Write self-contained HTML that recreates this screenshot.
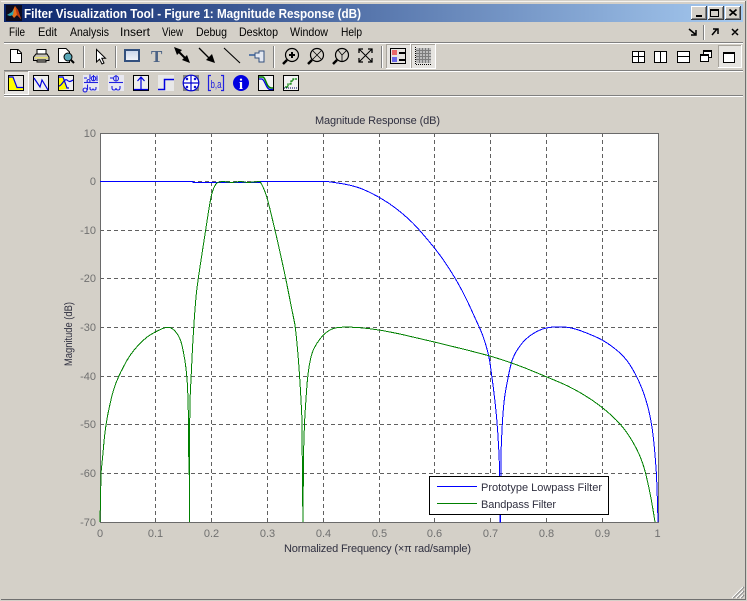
<!DOCTYPE html>
<html><head><meta charset="utf-8"><title>Filter Visualization Tool</title>
<style>html,body{margin:0;padding:0;background:#d4d0c8;overflow:hidden}svg{display:block}
text{font-family:"Liberation Sans",sans-serif}</style></head><body>
<svg xmlns="http://www.w3.org/2000/svg" width="747" height="601" viewBox="0 0 747 601">
<defs><linearGradient id="tb" x1="0" x2="1" y1="0" y2="0"><stop offset="0" stop-color="#0a246a"/><stop offset="1" stop-color="#a6caf0"/></linearGradient>
<linearGradient id="rf" x1="0" x2="0" y1="0" y2="1"><stop offset="0" stop-color="#c8d4ea"/><stop offset="1" stop-color="#f4f6fb"/></linearGradient></defs>
<rect width="747" height="601" fill="#d4d0c8"/>
<g shape-rendering="crispEdges">
<rect x="1" y="1" width="745" height="1" fill="#f4f2ee"/>
<rect x="745" y="1" width="1" height="599" fill="#707070"/>
<rect x="1" y="599" width="745" height="1" fill="#707070"/>
<rect x="4" y="4" width="739" height="18" fill="url(#tb)"/>
<rect x="6" y="5" width="16" height="16" fill="#0c0c20"/>
<rect x="4" y="42" width="739" height="1" fill="#808080"/><rect x="4" y="43" width="739" height="1" fill="#fff"/>
<rect x="4" y="70" width="739" height="1" fill="#808080"/><rect x="4" y="71" width="739" height="1" fill="#fff"/>
<rect x="4" y="95" width="739" height="1" fill="#808080"/><rect x="4" y="96" width="739" height="1" fill="#fff"/>
</g>
<polygon points="7,15 12,12 15,6 18,10 21,19 17,15 14,18 11,14" fill="#e8701a"/><polygon points="7,15 12,12 14,9 13,15 10,16" fill="#2aa6b4"/><polygon points="15,6 18,10 21,19 17,15" fill="#c03a10"/>
<text x="24" y="18" font-size="13" font-weight="bold" fill="#fff" textLength="337" lengthAdjust="spacingAndGlyphs">Filter Visualization Tool - Figure 1: Magnitude Response (dB)</text>
<g shape-rendering="crispEdges">
<rect x="691" y="6" width="16" height="14" fill="#404040"/><rect x="691" y="6" width="15" height="13" fill="#fff"/><rect x="692" y="7" width="14" height="12" fill="#808080"/><rect x="692" y="7" width="13" height="11" fill="#d4d0c8"/>
<rect x="708" y="6" width="16" height="14" fill="#404040"/><rect x="708" y="6" width="15" height="13" fill="#fff"/><rect x="709" y="7" width="14" height="12" fill="#808080"/><rect x="709" y="7" width="13" height="11" fill="#d4d0c8"/>
<rect x="725" y="6" width="16" height="14" fill="#404040"/><rect x="725" y="6" width="15" height="13" fill="#fff"/><rect x="726" y="7" width="14" height="12" fill="#808080"/><rect x="726" y="7" width="13" height="11" fill="#d4d0c8"/>
<rect x="696" y="15" width="6" height="2" fill="#000"/>
<path d="M710.500 9.500H718.500V16.500H710.500Z" fill="none" stroke="#000"/><rect x="710" y="9" width="9" height="2" fill="#000"/>
</g>
<path d="M729.500 9.500L736.500 15.500M736.500 9.500L729.500 15.500" stroke="#000" stroke-width="1.800" fill="none"/>
<g font-size="12" fill="#000">
<text x="9" y="36" textLength="16" lengthAdjust="spacingAndGlyphs">File</text>
<text x="38" y="36" textLength="19" lengthAdjust="spacingAndGlyphs">Edit</text>
<text x="70" y="36" textLength="39" lengthAdjust="spacingAndGlyphs">Analysis</text>
<text x="120" y="36" textLength="30" lengthAdjust="spacingAndGlyphs">Insert</text>
<text x="162" y="36" textLength="21" lengthAdjust="spacingAndGlyphs">View</text>
<text x="196" y="36" textLength="31" lengthAdjust="spacingAndGlyphs">Debug</text>
<text x="239" y="36" textLength="39" lengthAdjust="spacingAndGlyphs">Desktop</text>
<text x="290" y="36" textLength="38" lengthAdjust="spacingAndGlyphs">Window</text>
<text x="341" y="36" textLength="21" lengthAdjust="spacingAndGlyphs">Help</text>
</g>
<path d="M689 29L695 34M696 30V35H691M712 35L717 29M713 29H718V34M732 29L738 35M738 29L732 35" stroke="#000" stroke-width="1.500" fill="none"/>
<g shape-rendering="crispEdges"><rect x="703" y="25" width="1" height="15" fill="#808080"/><rect x="704" y="25" width="1" height="15" fill="#fff"/>
<rect x="83" y="46" width="1" height="22" fill="#808080"/><rect x="84" y="46" width="1" height="22" fill="#fff"/>
<rect x="115" y="46" width="1" height="22" fill="#808080"/><rect x="116" y="46" width="1" height="22" fill="#fff"/>
<rect x="273" y="46" width="1" height="22" fill="#808080"/><rect x="274" y="46" width="1" height="22" fill="#fff"/>
<rect x="381" y="46" width="1" height="22" fill="#808080"/><rect x="382" y="46" width="1" height="22" fill="#fff"/>
</g>
<path d="M10.500 49.500H18L21.500 53V62.500H10.500Z" fill="#fff" stroke="#000"/><path d="M17.500 49.500V53.500H21.500" fill="none" stroke="#000"/>
<path d="M37 55V49.500H46V55" fill="#fff" stroke="#000"/><path d="M36 54H47L49 57V60.500H46V62H37V60.500H33.500V57Z" fill="#c4c0b8" stroke="#000"/><rect x="35" y="57" width="13" height="1.500" fill="#e8e070"/><path d="M37 60H46" stroke="#000"/>
<path d="M58.500 48.500H66L69.500 52V62.500H58.500Z" fill="#fff" stroke="#000"/><circle cx="68" cy="57" r="4" fill="#5aa8b8" stroke="#000"/><path d="M71 60L74 63" stroke="#000" stroke-width="2"/>
<path d="M96.500 49.500V62L99.500 59.200L102 64L104 63L101.800 58.300H105.500Z" fill="#fff" stroke="#000"/>
<rect x="125" y="50" width="14" height="11" fill="url(#rf)" stroke="#33507e" stroke-width="2"/>
<text x="151" y="62" font-size="17" font-weight="bold" style="font-family:'Liberation Serif',serif" fill="#4b6285">T</text>
<path d="M178 51L187 60" stroke="#000" stroke-width="2"/><polygon points="174,47 182,50 177,55" fill="#000"/><polygon points="190,63 182,60 187,55" fill="#000"/>
<path d="M199 48L210 59" stroke="#000" stroke-width="1.300"/><polygon points="215,63 206,60 212,54" fill="#000"/>
<path d="M224 48L240 63" stroke="#000" stroke-width="1.100"/>
<path d="M249 55H255" stroke="#5a7aa8" stroke-width="2"/><path d="M255 53H259V51H264V62H259V58H255Z" fill="#e4e8f0" stroke="#33507e"/>
<g fill="none" stroke="#000">
<circle cx="292" cy="55" r="6.500" stroke-width="1.200"/><path d="M287 60L283 64" stroke-width="2.500"/><path d="M289 55H295M292 52V58" stroke-width="2"/>
<circle cx="317" cy="55" r="6.500" stroke-width="1.200"/><path d="M312 60L308 64" stroke-width="2.500"/><path d="M313 51L321 59M321 51L313 59" stroke-width=".8"/>
<circle cx="342" cy="55" r="6.500" stroke-width="1.200"/><path d="M337 60L333 64" stroke-width="2.500"/><path d="M338 50L342 55L347 50M342 55V61" stroke-width=".8"/>
<path d="M359 49L372 62M372 49L359 62" stroke-width="1"/><path d="M359 53V49H363M368 49H372V53M359 58V62H363M368 62H372V58" stroke-width="1.300"/>
</g>
<g shape-rendering="crispEdges">
<rect x="386" y="44" width="25" height="25" fill="#fff"/><rect x="386" y="44" width="24" height="24" fill="#a8a49c"/><rect x="387" y="45" width="23" height="23" fill="#e6e4e0"/>
<rect x="411" y="44" width="25" height="25" fill="#fff"/><rect x="411" y="44" width="24" height="24" fill="#a8a49c"/><rect x="412" y="45" width="23" height="23" fill="#e6e4e0"/>
<rect x="390.500" y="48.500" width="15" height="15" fill="#e6e4e0" stroke="#000"/>
<rect x="392" y="50" width="5" height="5" fill="#e86868"/><rect x="392" y="57" width="5" height="5" fill="#6868e8"/>
<rect x="399" y="52" width="6" height="2" fill="#000"/><rect x="399" y="59" width="6" height="2" fill="#000"/>
<rect x="416" y="48" width="15" height="15" fill="#bcbcbc"/>
<path d="M419.500 48V63M422.500 48V63M425.500 48V63M428.500 48V63M416 50.500H431M416 53.500H431M416 56.500H431M416 59.500H431" stroke="#7c7c7c"/>
<path d="M415.500 47V64.500H431" stroke="#000" stroke-dasharray="1 1" fill="none"/>
<rect x="632.500" y="51.500" width="12" height="11" fill="#fff" stroke="#000"/><path d="M638.500 51V63M632 56.500H645" stroke="#000"/>
<rect x="654.500" y="51.500" width="12" height="11" fill="#fff" stroke="#000"/><path d="M660.500 51V63" stroke="#000"/>
<rect x="677.500" y="51.500" width="12" height="11" fill="#fff" stroke="#000"/><path d="M677 56.500H690" stroke="#000"/>
<rect x="703.500" y="50.500" width="8" height="7" fill="#fff" stroke="#000"/><rect x="703" y="50" width="9" height="2" fill="#000"/>
<rect x="700.500" y="54.500" width="8" height="7" fill="#fff" stroke="#000"/><rect x="700" y="54" width="9" height="2" fill="#000"/>
<rect x="718" y="45" width="24" height="23" fill="#fff"/><rect x="718" y="45" width="23" height="22" fill="#a8a49c"/><rect x="719" y="46" width="22" height="21" fill="#e6e4e0"/>
<rect x="723.500" y="52.500" width="11" height="10" fill="#fff" stroke="#000"/><rect x="723" y="52" width="12" height="2" fill="#000"/>
<rect x="4" y="71" width="25" height="24" fill="#fff"/><rect x="4" y="71" width="24" height="23" fill="#a8a49c"/><rect x="5" y="72" width="23" height="22" fill="#e6e4e0"/>
<rect x="8.500" y="75.500" width="15" height="15" fill="#e6e4e0" stroke="#000" stroke-width="1"/>
<rect x="33.500" y="75.500" width="15" height="15" fill="#eee" stroke="#000"/>
<rect x="58.500" y="75.500" width="15" height="15" fill="#eee" stroke="#000"/>
<rect x="83" y="75" width="16" height="16" fill="#e8e8f0"/>
<rect x="108" y="75" width="16" height="16" fill="#e8e8f0"/>
<rect x="133.500" y="75.500" width="15" height="15" fill="#eee" stroke="#000"/>
<rect x="158" y="75" width="16" height="16" fill="#e8e8e8"/>
<rect x="183" y="75" width="16" height="16" fill="#808080"/>
<rect x="258.500" y="75.500" width="15" height="15" fill="#f2f2f2" stroke="#000"/>
<rect x="283.500" y="75.500" width="15" height="15" fill="#f2f2f2" stroke="#000"/>
</g>
<polygon points="9,77 13,77 17,88 23,88 23,90 9,90" fill="#ffff00"/><path d="M9 77H13L17 87.500H23" fill="none" stroke="#0000e0" stroke-width="1.200"/>
<path d="M34 78L40 87L42 80L48 90" fill="none" stroke="#0000e0" stroke-width="1.200"/>
<polygon points="59,78 63,78 67,89 59,90" fill="#ffff00"/><path d="M59 77H63L67 88H69M59 86C62 86 64 78 67 80C69 82 70 82 73 80" fill="none" stroke="#0000e0" stroke-width="1.200"/>
<g fill="none" stroke="#2020e0" stroke-width="1.100">
<path d="M84 82.500H98"/><path d="M84 78H87M88.500 79.500a1.500 1.500 0 1 0 .1 0M90 74.500V79"/><circle cx="93.500" cy="78.500" r="2.200"/><path d="M93.500 75V81M97 75.500V81"/>
<path d="M85 88a2 2 0 1 0 .1 0M87.500 84.500V90M90 87v1.500q0 1.500 1.500 1.500t1.500-1.500q0 1.500 1.500 1.500t1.500-1.500V87"/>
<path d="M109 82.500H123"/><path d="M110 78H113"/><circle cx="116" cy="78.500" r="2.500"/><path d="M116 75V81.500"/>
<path d="M112 86v2q0 2 2 2t2-2q0 2 2 2t2-2v-2"/>
<path d="M141 89V77M137.500 81L141 77L144.500 81M134 89.500H148" stroke="#0000e0" stroke-width="1.200"/>
<path d="M158 89.500H164.500V79.500H174" stroke="#0000e0" stroke-width="1.500"/>
</g>
<circle cx="191" cy="83" r="7.800" fill="#fff" stroke="#0000d0" stroke-width="1.200"/><path d="M183 83H199M191 75V91" stroke="#0000d0" stroke-width="1.200"/><path d="M186 78l2 2m0-2l-2 2M194 78l2 2m0-2l-2 2M186 86l2 2m0-2l-2 2M194 86l2 2m0-2l-2 2" stroke="#0000d0"/>
<path d="M211 75.500H208.500V90.500H211M221 75.500H223.500V90.500H221" fill="none" stroke="#2020e0" stroke-width="1.200"/>
<text x="210.500" y="88" font-size="11" fill="#2020e0" textLength="11" lengthAdjust="spacingAndGlyphs">b,a</text>
<circle cx="241" cy="83" r="8" fill="#0000e0"/>
<text x="241" y="89" font-size="15" font-weight="bold" fill="#fff" text-anchor="middle" style="font-family:'Liberation Serif',serif">i</text>
<path d="M259 77H263C266 78 266 87 271 88H273" fill="none" stroke="#008000" stroke-width="1.500"/><path d="M259 79H262C265 80 266 89 270 89.500H273" fill="none" stroke="#0000e0" stroke-width="1.200"/>
<path d="M285 87H288V84H291V81H293V79H297" fill="none" stroke="#008000" stroke-width="1.200" stroke-dasharray="3 .6"/>
<path d="M284 88H298" stroke="#000060" stroke-dasharray="1 1"/>
<g shape-rendering="crispEdges">
<rect x="100" y="133" width="558" height="389" fill="#fff"/>
<g stroke="#606060" stroke-dasharray="4 3" fill="none">
<path d="M155.500 133V522M211.500 133V522M267.500 133V522M323.500 133V522M379.500 133V522M434.500 133V522M490.500 133V522M546.500 133V522M602.500 133V522"/>
<path d="M100 181.500H658M100 230.500H658M100 278.500H658M100 327.500H658M100 376.500H658M100 424.500H658M100 473.500H658"/>
</g>
<rect x="100.500" y="133.500" width="558" height="389" fill="none" stroke="#6a6a6a"/>
<path fill="none" stroke="#0000ff" d="M100 181.500H193V182.500H260V181.500H327Q338 183 344 184Q350 185 356.500 187Q363 189 371 193Q379 197 386 201.500Q393 206 398 210Q403 214 408 218.500Q413 223 417.500 228Q422 233 428.500 240.750Q435 248.500 440 255.250Q445 262 451 271.500Q457 281 462 290.500Q467 300 471 309Q475 318 479 326.500Q483 335 486 345.500Q489 356 490 363Q491 370 493 385Q495 400 496.500 416.500Q498 433 498.750 449.500L499.500 466L500 522L500.500 522L501 453Q502 427 503 413.500Q504 400 505.500 391.500Q507 383 509 373Q511 363 513 358Q515 353 518.500 348Q522 343 525 340Q528 337 532.500 334Q537 331 542 329.250Q547 327.500 553.500 327Q560 326.500 566.500 327.250Q573 328 580 330.500Q587 333 595 336.500Q603 340 610 345Q617 350 622 355Q627 360 631 366.500Q635 373 638.500 380.500Q642 388 644.500 395.500Q647 403 649 411.500Q651 420 652.250 429Q653.500 438 654.500 449Q655.500 460 656.250 471.500Q657 483 658 522"/>
<path fill="none" stroke="#008000" d="M100 522L100.500 500L101 473L103 453Q104.300 437 105.500 428.500Q106.700 420 108 413.500Q109.300 407 111.300 398.500Q113.300 390 115.800 383.500Q118.300 377 120.800 372Q123.300 367 126.600 361Q130 355 134.100 350Q138.300 345 142.500 341Q146.700 337 150.800 334.500Q155 332 160.800 329.300Q166.700 326.600 170 327.500Q173.300 329 175.800 332Q178.300 335 180 339Q181.700 343 183.300 351.500Q185 360 186 368.500Q187 377 187.500 387Q188 397 188.300 412L188.500 457L189 427L189.500 522L189.500 437L190 400Q191.700 363 192.500 348Q193.300 333 194.500 316Q196 295 197.200 286.500Q198.300 278 200.800 261.500Q203.300 245 204.500 237.500Q205.700 230 207.800 216Q210 202 211.300 196Q212.700 190 214.700 186Q216.700 182.300 219.800 181.900L223 181.500L232 182.500L240 181.500L248 182.500L260 181.500Q263.300 186.700 265.800 194Q268.300 201.700 271.600 216Q275 230 277.500 241Q280 252 282.800 265Q285.700 278 287.800 289Q290 300 292.500 312.500L295 325Q296.500 337 297.600 350Q298.700 363 299.700 378Q300.700 393 301.300 406L302 420L302.500 490L303 522L303.500 453L304.500 423Q306 397 307.100 383.500Q308.300 370 310 361.500Q311.700 353 314.200 348Q316.700 343 320.800 338Q325 333 329 330.500Q333.300 328 338.300 327.500Q343.300 327 351.600 327.200Q360 327.500 370 328.750Q380 330 390 332L400 334L433 341.700L467 350L490 356Q513 363 530 370Q547 377 560 382.500Q573 388 586.500 396.500Q600 405 611 415Q622 425 628.500 435Q635 445 639 454Q643 463 645.500 473Q648 483 650 493Q652 503 655 522"/>
<rect x="429.500" y="476.500" width="179" height="38" fill="#fff" stroke="#000"/>
<path d="M437 486.500H477" stroke="#0000ff"/><path d="M437 503.500H477" stroke="#008000"/>
</g>
<g font-size="11" fill="#303040">
<text x="481" y="491" textLength="121" lengthAdjust="spacing">Prototype Lowpass Filter</text>
<text x="481" y="508" textLength="75" lengthAdjust="spacing">Bandpass Filter</text>
<text x="315" y="124" textLength="125" lengthAdjust="spacing">Magnitude Response (dB)</text>
<text x="284" y="552" textLength="187" lengthAdjust="spacing">Normalized Frequency (×π rad/sample)</text>
<text transform="translate(72,366) rotate(-90)" textLength="64" lengthAdjust="spacingAndGlyphs">Magnitude (dB)</text>
</g>
<g font-size="11" fill="#707070" text-anchor="end">
<text x="96" y="137">10</text><text x="96" y="185">0</text><text x="96" y="234">-10</text><text x="96" y="282">-20</text><text x="96" y="331">-30</text><text x="96" y="380">-40</text><text x="96" y="428">-50</text><text x="96" y="477">-60</text><text x="96" y="526">-70</text>
</g>
<g font-size="11" fill="#707070" text-anchor="middle">
<text x="100" y="537">0</text><text x="155.500" y="537">0.1</text><text x="211.500" y="537">0.2</text><text x="267.500" y="537">0.3</text><text x="323.500" y="537">0.4</text><text x="379.500" y="537">0.5</text><text x="434.500" y="537">0.6</text><text x="490.500" y="537">0.7</text><text x="546.500" y="537">0.8</text><text x="602.500" y="537">0.9</text><text x="657.500" y="537">1</text>
</g>
<path d="M733 598L744 587M737 598L744 591M741 598L744 595" stroke="#808080" stroke-width="1.500" fill="none"/>
<path d="M732 598L743 587M736 598L743 591M740 598L743 595" stroke="#fff" fill="none"/>
</svg>
</body></html>
